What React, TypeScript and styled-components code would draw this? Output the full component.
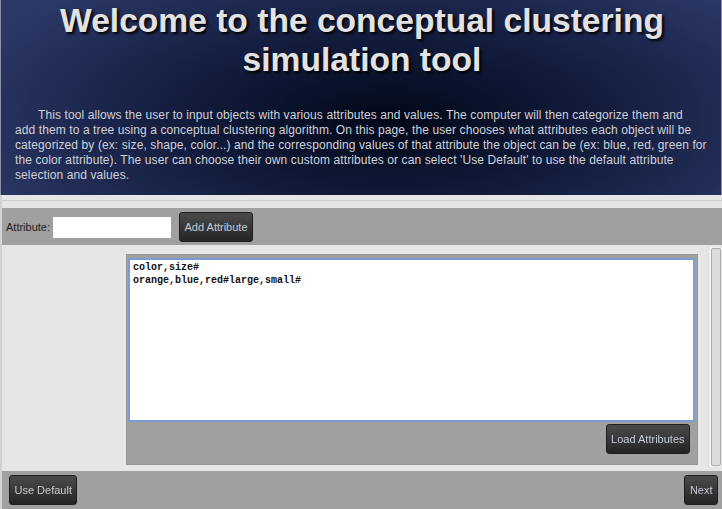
import { useEffect, useRef } from 'react';
import styled, { createGlobalStyle } from 'styled-components';

const GlobalStyle = createGlobalStyle`
  html, body {
    margin: 0;
    padding: 0;
    background: #e6e6e6;
    font-family: 'Liberation Sans', Arial, sans-serif;
    font-size: 11px;
    overflow: hidden;
  }
  * {
    box-sizing: border-box;
  }
`;

const Page = styled.div`
  width: 722px;
  height: 509px;
  display: flex;
  flex-direction: column;
  background: #e6e6e6;
  border-left: 2px solid #d2d2d2;
`;

const Header = styled.header`
  height: 195px;
  flex-shrink: 0;
  margin-left: -2px;
  padding: 0 2px 0 14px;
  border-left: 1px solid #8a90a8;
  border-right: 1px solid #8a90a8;
  background: radial-gradient(ellipse 62% 95% at 54% 62%, #020817 0%, #111a3a 42%, #2c3867 100%);
  overflow: hidden;
`;

const Title = styled.h1`
  margin: 1px 10px 0 0;
  font-size: 33.6px;
  line-height: 39px;
  font-weight: bold;
  text-align: center;
  color: #e2e2e2;
  text-shadow: 2px 2px 3px #000;
`;

const Intro = styled.p`
  margin: 29px 0 0;
  font-size: 12px;
  line-height: 15px;
  letter-spacing: 0.1px;
  text-indent: 23px;
  white-space: nowrap;
  color: #cfd1d8;
`;

const Separator = styled.div`
  height: 8px;
  margin-top: 5px;
  flex-shrink: 0;
  border-top: 1px solid #d0d0d0;
`;

const AttributeBar = styled.div`
  height: 37px;
  flex-shrink: 0;
  display: flex;
  align-items: center;
  padding-left: 4px;
  background: #a0a0a0;
`;

const Label = styled.label`
  color: #1e1e1e;
  font-size: 11px;
  margin-top: 1px;
`;

const TextInput = styled.input`
  width: 118px;
  height: 21px;
  margin: 1px 8px 0 3px;
  border: none;
  background: #fff;
  outline: none;
`;

const Button = styled.button`
  height: 30px;
  padding: 0 4.5px;
  font-family: 'Liberation Sans', Arial, sans-serif;
  font-size: 11px;
  color: #c6cbd4;
  background: linear-gradient(#4b4b4b, #242424);
  border: 1px solid #1f1f1f;
  border-radius: 3px;
  cursor: pointer;
`;

const Middle = styled.div`
  height: 222px;
  flex-shrink: 0;
  display: flex;
  align-items: flex-start;
  padding-left: 124px;
`;

const Panel = styled.div`
  width: 572px;
  height: 211px;
  margin-top: 9px;
  display: flex;
  flex-direction: column;
  padding: 3px 3px 0 1px;
  background: #a0a0a0;
  border: 1px solid #969696;
`;

const Editor = styled.textarea`
  width: 567px;
  height: 164px;
  padding: 2px 3px;
  resize: none;
  border: 2px solid #7d9cd6;
  border-radius: 2px;
  outline: none;
  background: #fff;
  font-family: 'Liberation Mono', 'Courier New', monospace;
  font-size: 10px;
  font-weight: bold;
  line-height: 12.5px;
  color: #111;
  overflow: hidden;
`;

const PanelActions = styled.div`
  display: flex;
  justify-content: flex-end;
  padding: 2px 4px 0 0;
`;

const ScrollTrack = styled.div`
  width: 13px;
  height: 220px;
  margin: 2px 0 0 10px;
  padding: 1px 0 1px 2px;
  display: flex;
  background: #f2f2f2;
  border-left: 1px solid #dcdcdc;
`;

const ScrollThumb = styled.div`
  flex: 1;
  background: #dcdcdc;
  border: 1px solid #ababab;
  border-radius: 2px;
`;

const BottomBar = styled.div`
  height: 38px;
  margin-top: 4px;
  flex-shrink: 0;
  display: flex;
  justify-content: space-between;
  align-items: flex-start;
  padding: 4px 4px 0 7px;
  background: #a0a0a0;
`;

const DEFAULT_VALUE = 'color,size#\norange,blue,red#large,small#';

const INTRO_LINES = [
  'This tool allows the user to input objects with various attributes and values. The computer will then categorize them and',
  'add them to a tree using a conceptual clustering algorithm. On this page, the user chooses what attributes each object will be',
  'categorized by (ex: size, shape, color...) and the corresponding values of that attribute the object can be (ex: blue, red, green for',
  "the color attribute). The user can choose their own custom attributes or can select 'Use Default' to use the default attribute",
  'selection and values.',
];

export default function App() {
  const editorRef = useRef<HTMLTextAreaElement>(null);

  useEffect(() => {
    const el = editorRef.current;
    if (!el) return;
    el.focus();
    el.setSelectionRange(el.value.length, el.value.length);
  }, []);

  return (
    <>
      <GlobalStyle />
      <Page>
        <Header>
          <Title>Welcome to the conceptual clustering simulation tool</Title>
          <Intro>
            {INTRO_LINES.map((line, i) => (
              <span key={i}>
                {line}
                {i < INTRO_LINES.length - 1 && <br />}
              </span>
            ))}
          </Intro>
        </Header>
        <Separator />
        <AttributeBar>
          <Label htmlFor="attr">Attribute:</Label>
          <TextInput id="attr" type="text" />
          <Button type="button">Add Attribute</Button>
        </AttributeBar>
        <Middle>
          <Panel>
            <Editor ref={editorRef} defaultValue={DEFAULT_VALUE} spellCheck={false} />
            <PanelActions>
              <Button type="button">Load Attributes</Button>
            </PanelActions>
          </Panel>
          <ScrollTrack>
            <ScrollThumb />
          </ScrollTrack>
        </Middle>
        <BottomBar>
          <Button type="button">Use Default</Button>
          <Button type="button">Next</Button>
        </BottomBar>
      </Page>
    </>
  );
}
